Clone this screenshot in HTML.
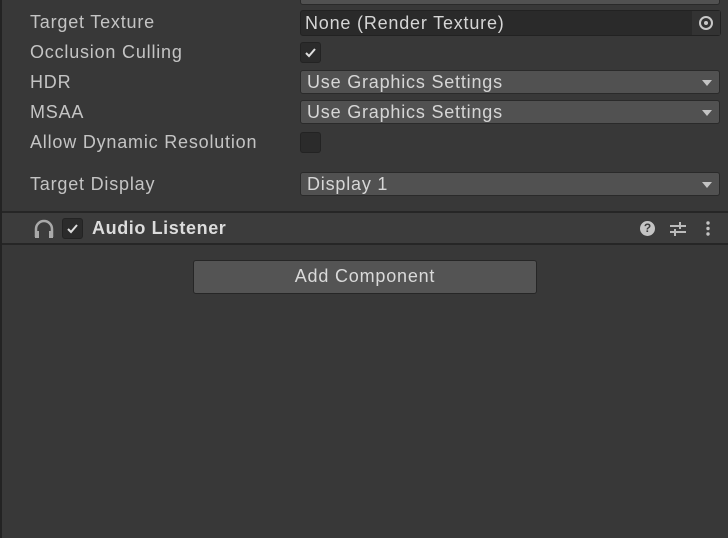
<!DOCTYPE html><html><head><style>
body{margin:0;width:728px;height:538px;background:#383838;overflow:hidden;position:relative;font-family:"Liberation Sans",sans-serif;font-size:18px;color:#c8c8c8;letter-spacing:0.8px}
.a{position:absolute}
.lbl{left:30px;color:#c4c4c4}
.dd{left:300px;width:420px;height:24px;background:#515151;border:1px solid #2a2a2a;border-radius:3px;box-sizing:border-box;color:#d6d6d6;padding-left:6px;line-height:22px}
.dd:after{content:"";position:absolute;right:7px;top:9px;border-left:5px solid transparent;border-right:5px solid transparent;border-top:6px solid #c4c4c4}
.cb{left:300px;width:21px;height:21px;background:#2b2b2b;border:1px solid #232323;border-radius:3px;box-sizing:border-box}
</style></head><body>
<div class="a" style="left:0;top:0;width:2px;height:538px;background:#232323"></div>
<div class="a dd" style="top:-19px"></div>
<div class="a lbl" style="top:12px">Target Texture</div>
<div class="a" style="left:300px;top:10px;width:421px;height:26px;background:#2a2a2a;border:1px solid #222;border-radius:3px;box-sizing:border-box;color:#d6d6d6;padding-left:4px;line-height:24px">None (Render Texture)
<div class="a" style="right:0;top:0;width:28px;height:24px;background:#333"><div class="a" style="left:7px;top:5px;width:10px;height:10px;border:2px solid #c8c8c8;border-radius:50%"><div class="a" style="left:3px;top:3px;width:4px;height:4px;background:#c8c8c8;border-radius:50%"></div></div></div></div>
<div class="a lbl" style="top:42px">Occlusion Culling</div>
<div class="a cb" style="top:42px"><svg width="19" height="19" class="a" style="left:0;top:0"><path d="M5 10l3 3 6-7" stroke="#ddd" stroke-width="2" fill="none"/></svg></div>
<div class="a lbl" style="top:72px">HDR</div>
<div class="a dd" style="top:70px">Use Graphics Settings</div>
<div class="a lbl" style="top:102px">MSAA</div>
<div class="a dd" style="top:100px">Use Graphics Settings</div>
<div class="a lbl" style="top:132px">Allow Dynamic Resolution</div>
<div class="a cb" style="top:132px"></div>
<div class="a lbl" style="top:174px">Target Display</div>
<div class="a dd" style="top:172px">Display 1</div>
<div class="a" style="left:2px;top:211px;width:726px;height:34px;background:#3c3c3c;border-top:2px solid #262626;border-bottom:2px solid #262626;box-sizing:border-box"></div>
<svg class="a" style="left:33px;top:219px" width="22" height="20"><path d="M3 18v-8a8 8 0 0 1 16 0v8" stroke="#aaa" stroke-width="2.5" fill="none"/><rect x="2" y="12" width="4" height="7" fill="#aaa"/><rect x="16" y="12" width="4" height="7" fill="#aaa"/></svg>
<div class="a cb" style="left:62px;top:218px"><svg width="19" height="19" class="a" style="left:0;top:0"><path d="M5 10l3 3 6-7" stroke="#ddd" stroke-width="2" fill="none"/></svg></div>
<div class="a" style="left:92px;top:218px;font-weight:bold;color:#dcdcdc;letter-spacing:0.6px">Audio Listener</div>
<div class="a" style="left:640px;top:221px;width:15px;height:15px;border-radius:50%;background:#c4c4c4;color:#3c3c3c;font-size:12px;font-weight:bold;text-align:center;line-height:15px;letter-spacing:0">?</div>
<svg class="a" style="left:669px;top:220px" width="18" height="17"><path d="M1 6h16M1 12h16" stroke="#bbb" stroke-width="2"/><path d="M11 2v7M6 9v7" stroke="#bbb" stroke-width="2"/></svg>
<svg class="a" style="left:705px;top:220px" width="6" height="17"><circle cx="3" cy="3" r="1.7" fill="#c4c4c4"/><circle cx="3" cy="8.5" r="1.7" fill="#c4c4c4"/><circle cx="3" cy="14" r="1.7" fill="#c4c4c4"/></svg>
<div class="a" style="left:193px;top:260px;width:344px;height:34px;background:#545454;border:1px solid #262626;border-radius:3px;box-sizing:border-box;text-align:center;line-height:31px;color:#dadada">Add Component</div>
</body></html>
